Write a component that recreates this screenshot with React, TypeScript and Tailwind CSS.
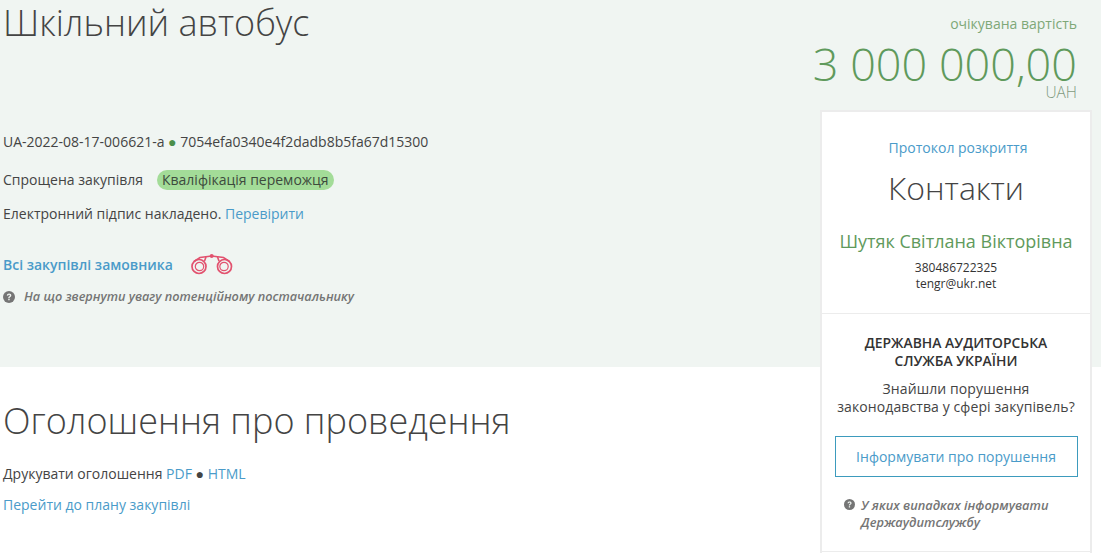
const Help = ({ className }: { className: string }) => (
  <svg className={className} viewBox="0 0 24 24">
    <circle cx="12" cy="12" r="12" fill="#757575" />
    <path d="M7.6 9.2C7.9 6.6 9.7 5.2 12.2 5.2c2.6 0 4.4 1.5 4.4 3.7 0 1.600-.9 2.500-2.100 3.300-1 .7-1.300 1.100-1.300 2.100h-2.700c-.1-1.800.5-2.700 1.700-3.500 1-.7 1.500-1.100 1.500-1.800 0-.8-.7-1.300-1.600-1.300-1 0-1.700.6-1.800 1.800z" fill="#f0f5f2" />
    <rect x="10.500" y="15.700" width="2.800" height="2.800" fill="#f0f5f2" />
  </svg>
)

const Binoculars = () => (
  <svg className="w-[44px] h-[24px] ml-[17px]" viewBox="0 0 44 24" fill="none" stroke="#e2526f">
    <circle cx="9" cy="14.500" r="7" strokeWidth="1.700" />
    <circle cx="9.500" cy="14.500" r="4.200" strokeWidth="1.200" />
    <circle cx="34.500" cy="14.500" r="7" strokeWidth="1.700" />
    <circle cx="34" cy="14.500" r="4.200" strokeWidth="1.200" />
    <path d="M4 9.500 10 5.500 21.700 4 33.500 5.500l6 4" strokeWidth="1.600" />
    <path d="M14.500 9 16 5M29 9 27.500 5" strokeWidth="1.600" />
    <circle cx="21.700" cy="4" r="2" fill="#e2526f" stroke="none" />
  </svg>
)

const ContactCard = () => (
  <aside className="absolute top-[110px] right-[9px] w-[272px] h-[443px] bg-white border-x-2 border-t-2 border-[#ececec] text-center">
    <div className="h-[202px] border-b border-[#ececec] flex flex-col items-center">
      <a className="mt-[26px] pl-[4px] text-[14px] leading-[20px] text-[#4a9bc9]">Протокол розкриття</a>
      <h3 className="mt-[8px] text-[32px] leading-[44px] font-light text-[#444]">Контакти</h3>
      <p className="mt-[19px] text-[18px] leading-[24px] text-[#5f9a5c]">Шутяк Світлана Вікторівна</p>
      <p className="mt-[7px] text-[12px] leading-[16px] text-[#333]">380486722325</p>
      <p className="-mt-[1px] text-[12px] leading-[18px] text-[#333]">tengr@ukr.net</p>
    </div>
    <div className="h-[238px] border-b border-[#ececec] px-[12px] flex flex-col items-center">
      <h4 className="mt-[20px] text-[13.900px] leading-[18px] font-semibold text-[#333] w-[200px]">ДЕРЖАВНА АУДИТОРСЬКА СЛУЖБА УКРАЇНИ</h4>
      <p className="mt-[10px] text-[14px] leading-[18px] tracking-[0.1px] text-[#444] whitespace-nowrap">Знайшли порушення<br />законодавства у сфері закупівель?</p>
      <a className="mt-[20px] w-[243px] h-[41px] border border-[#3d9bbd] flex items-center justify-center text-[14px] text-[#4a9bc9]">Інформувати про порушення</a>
      <div className="mt-[20px] w-full flex items-start gap-[6px] pl-[10px] text-left">
        <Help className="w-[11px] h-[11px] mt-[2px] shrink-0" />
        <em className="text-[12.800px] leading-[16.500px] font-semibold text-[#757575]">У яких випадках інформувати Держаудитслужбу</em>
      </div>
    </div>
  </aside>
)

export default function App() {
  return (
    <div className="relative w-[1101px] h-[553px] overflow-hidden bg-white font-['Open_Sans',sans-serif]">
      <header className="h-[367px] bg-[#f0f5f2] pl-[3px] pr-[24px] flex justify-between">
        <div className="flex flex-col items-start text-[14px] text-[#444]">
          <h1 className="text-[36px] leading-[46px] font-light text-[#444]">Шкільний автобус</h1>
          <p className="mt-[86px] leading-[20px]">
            UA-2022-08-17-006621-a <span className="text-[#4c8f4a]">●</span> 7054efa0340e4f2dadb8b5fa67d15300
          </p>
          <div className="mt-[18px] flex items-center">
            <span className="leading-[20px]">Спрощена закупівля</span>
            <span className="ml-[14px] h-[20px] rounded-full bg-[#a3dc98] px-[5px] leading-[20px] text-[#3d4a3d]">Кваліфікація переможця</span>
          </div>
          <p className="mt-[14px] leading-[20px]">
            Електронний підпис накладено. <a className="text-[#4a9bc9]">Перевірити</a>
          </p>
          <div className="mt-[28px] flex items-center h-[24px]">
            <a className="text-[#4a9bc9] font-semibold">Всі закупівлі замовника</a>
            <Binoculars />
          </div>
          <div className="mt-[11px] flex items-center gap-[9px]">
            <Help className="w-[12px] h-[12px]" />
            <em className="text-[12.700px] font-semibold text-[#757575]">На що звернути увагу потенційному постачальнику</em>
          </div>
        </div>
        <div className="flex flex-col items-end pt-[14px]">
          <span className="text-[14px] leading-[20px] text-[#7ea878]">очікувана вартість</span>
          <span className="mt-[4px] text-[45px] leading-[52px] font-light text-[#5f9a5c]">3 000 000,00</span>
          <span className="-mt-[6px] text-[15.500px] leading-[16px] font-light text-[#7f9a80]">UAH</span>
        </div>
      </header>
      <section className="pl-[3px] text-[14px] text-[#444]">
        <h2 className="mt-[30px] text-[36px] leading-[48px] font-light text-[#444]">Оголошення про проведення</h2>
        <p className="mt-[19px] leading-[20px]">
          Друкувати оголошення <a className="text-[#4a9bc9]">PDF</a> ● <a className="text-[#4a9bc9]">HTML</a>
        </p>
        <p className="mt-[11px] leading-[20px]"><a className="text-[#4a9bc9]">Перейти до плану закупівлі</a></p>
      </section>
      <ContactCard />
    </div>
  )
}
